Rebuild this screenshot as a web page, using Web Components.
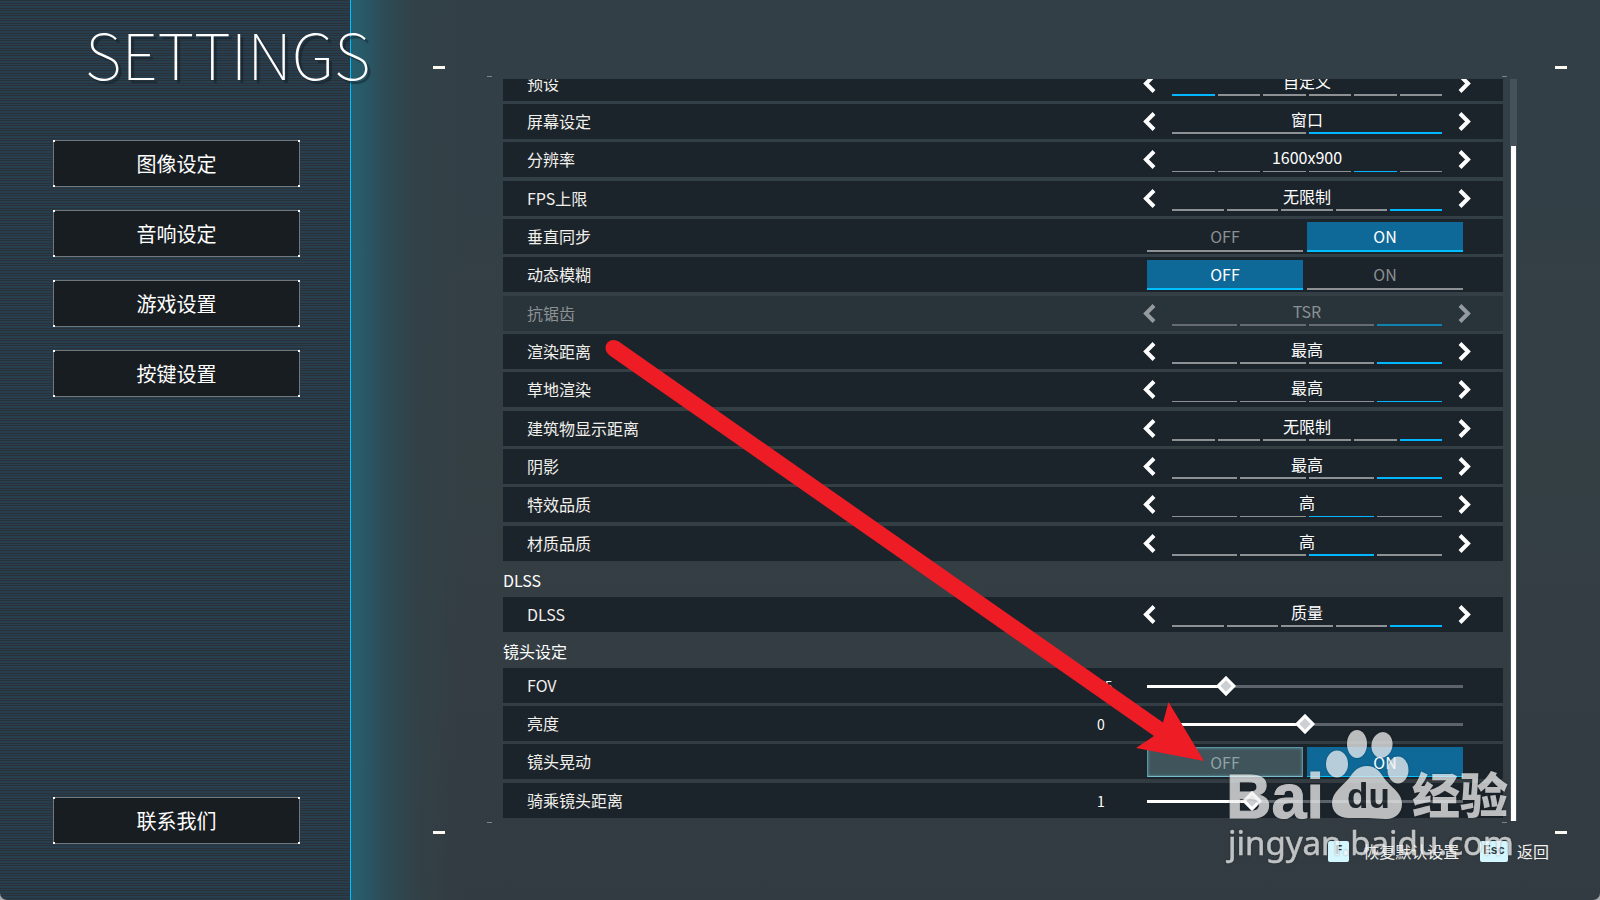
<!DOCTYPE html>
<html lang="zh-CN">
<head>
<meta charset="utf-8">
<title>Settings</title>
<style>
html,body{margin:0;min-height:100vh}
html{background:#a9adb0}
body{font-family:"Noto Sans CJK SC",sans-serif;color:#fff;display:flex}
game-settings{flex:1}
</style>
</head>
<body>
<game-settings></game-settings>
<script>
const define=(name,html,setup)=>{
  const t=document.createElement('template');t.innerHTML=html;
  customElements.define(name,class extends HTMLElement{
    connectedCallback(){
      if(this.shadowRoot)return;
      const r=this.attachShadow({mode:'open'});
      r.append(t.content.cloneNode(true));
      if(setup)setup(this,r);
    }
  });
};

define('menu-button',`<style>
:host{display:block}
button{position:relative;box-sizing:border-box;width:100%;height:47px;padding:0;border:1px solid #70777a;background:#181d21;color:#fff;font:400 20px/24px "Noto Sans CJK SC",sans-serif;display:block}
i{position:absolute;width:2px;height:2px;background:#fff}
.a,.b{top:-1px}.c,.d{bottom:-1px}.a,.c{left:-1px}.b,.d{right:-1px}
</style><button type="button"><slot></slot><i class="a"></i><i class="b"></i><i class="c"></i><i class="d"></i></button>`);

define('side-bar',`<style>
:host{position:relative;z-index:1;display:flex;flex-direction:column;box-sizing:border-box;width:351px;padding:0 50px 56px 53px;border-right:1px solid #00bfff;
background:repeating-linear-gradient(180deg,#2a3139 0 1px,#263e4d 1px 3px,#2a3139 3px 4px,#263e4d 4px 5px)}
h1{margin:0 -70px 0 32px;padding-top:20px;height:120px;box-sizing:content-box;font-size:64px;line-height:64px;font-weight:100;white-space:nowrap;text-shadow:3px 3px 1px rgba(15,28,36,.5)}
nav{display:flex;flex-direction:column;gap:23px;flex:1}
.end{margin-top:auto}
</style><h1>SETTINGS</h1><nav>
<menu-button>图像设定</menu-button><menu-button>音响设定</menu-button><menu-button>游戏设置</menu-button><menu-button>按键设置</menu-button>
<menu-button class="end">联系我们</menu-button></nav>`);

define('setting-row',`<style>
:host{display:flex;align-items:center;height:35px;padding:0 40px 0 24px;background:#1c242b;font-size:16px;line-height:24px;color:#f2f0eb}
:host([disabled]){background:#29343a;color:#8b9093}
.label{flex:1;padding-bottom:2px}
</style><span class="label"><slot name="label"></slot></span><slot></slot>`);

define('option-picker',`<style>
:host{display:grid;grid-template-columns:25px 270px 21px;width:316px;height:35px;color:#fff}
:host([dim]){color:#8b9093}
:host([dim]) .bars{opacity:.6}
:host([dim]) svg{opacity:.5}
button{border:0;background:none;padding:0;display:flex;align-items:center;color:#fff}
button:last-child{justify-content:flex-end}
svg{display:block;flex:none;margin:0 -9px 0 -5px}
.mid{display:flex;flex-direction:column;text-align:center}
.v{height:28px;line-height:30px}
.bars{display:flex;gap:3px}
.bars i{flex:1;height:2px;background:#8d9194}
.bars i.on{background:#00b7ff}
:host([thin]) .bars i{height:1px;margin-top:1px}
</style><button type="button" aria-label="上一项"><svg width="14" height="21" viewBox="0 0 14 21"><path d="M12 2.500L4 10.500L12 18.500" fill="none" stroke="currentColor" stroke-width="4"/></svg></button>
<div class="mid"><div class="v"><slot></slot></div><div class="bars"></div></div>
<button type="button" aria-label="下一项"><svg width="14" height="21" viewBox="0 0 14 21"><path d="M2 2.500L10 10.500L2 18.500" fill="none" stroke="currentColor" stroke-width="4"/></svg></button>`,(el,r)=>{
  const n=+el.getAttribute('count'),at=+el.getAttribute('at'),b=r.querySelector('.bars');
  for(let k=1;k<=n;k++){const i=document.createElement('i');if(k===at)i.className='on';b.append(i)}
});

define('on-off',`<style>
:host{display:grid;grid-template-columns:1fr 1fr;gap:4px;width:316px;margin-top:1px}
button{box-sizing:border-box;height:30px;padding:0;border:0;border-bottom:2px solid #8d9194;background:none;color:#8b9093;font:16px/24px "Noto Sans CJK SC",sans-serif}
button.on{background:#0f6998;border-color:#00bfff;color:#fff}
:host([hover]) button:first-of-type{background:#3f545b;color:#8fa3a8;border:1px solid #5b93a3;border-bottom-color:#77bccb;box-shadow:inset 0 0 3px #5f9fae}
:host([hover]) button.on{border-bottom-width:1px}
</style><button type="button">OFF</button><button type="button">ON</button>`,(el,r)=>{
  r.querySelectorAll('button')[el.getAttribute('value')==='on'?1:0].classList.add('on');
});

define('range-field',`<style>
:host{display:flex;align-items:center}
output{width:26px;margin-right:24px;font-size:14px;line-height:20px;color:#fff}
input{-webkit-appearance:none;appearance:none;width:330px;height:21px;margin:0 -7px;background:none}
input::-webkit-slider-runnable-track{height:21px;background:linear-gradient(#fff,#fff) 7px 10px/var(--fill) 3px no-repeat,linear-gradient(#5c636a,#5c636a) 7px 10px/316px 3px no-repeat}
input::-webkit-slider-thumb{-webkit-appearance:none;box-sizing:border-box;width:14px;height:14px;margin-top:4px;border:3px solid #fff;background:#cdd0d3;transform:rotate(45deg)}
</style><output></output><input type="range">`,(el,r)=>{
  const i=r.querySelector('input'),g=a=>el.getAttribute(a);
  i.min=g('min');i.max=g('max');i.step='any';i.value=g('value');i.setAttribute('aria-label',g('name'));
  i.style.setProperty('--fill',Math.round(316*(g('value')-g('min'))/(g('max')-g('min')))+'px');
  r.querySelector('output').textContent=g('value');
});

define('setting-group',`<style>
:host{display:flex;flex-direction:column;gap:3px;flex:none}
::slotted(h2){margin:0 0 -3px;height:36px;font-size:16px;line-height:38px;font-weight:400}
::slotted(setting-row:nth-child(3n+1)){margin-bottom:1px}
::slotted(setting-row:last-child){margin-bottom:0}
</style><slot></slot>`);

define('scroll-panel',`<style>
:host{display:grid;grid-template-columns:1fr 7px;gap:7px;min-height:0}
.view{display:flex;flex-direction:column;justify-content:flex-end;overflow:hidden;padding-bottom:4px;min-height:0}
.track{background:#46525a;display:flex;flex-direction:column;justify-content:flex-end;height:calc(100% - 1px)}
.thumb{height:91%;margin:0 1px;background:#fff}
</style><div class="view"><slot></slot></div><div class="track"><div class="thumb"></div></div>`);

define('corner-marks',`<style>
:host{position:absolute;pointer-events:none}
i{position:absolute;width:var(--w);height:var(--h);background:var(--c)}
.a,.b{top:0}.c,.d{bottom:0}.a,.c{left:0}.b,.d{right:0}
</style><i class="a"></i><i class="b"></i><i class="c"></i><i class="d"></i>`);

define('key-hint',`<style>
:host{display:flex;align-items:center;font-size:16px;line-height:24px;color:#f4f2ee}
kbd{box-sizing:border-box;min-width:21px;height:21px;padding:0 3px;margin-right:9px;border-radius:2px;background:#d3f6ff;color:#2c3940;font:bold 12px/21px "Liberation Mono",monospace;text-align:center}
:host([wide]) kbd{margin-right:14px}
</style><kbd></kbd><slot></slot>`,(el,r)=>{r.querySelector('kbd').textContent=el.getAttribute('key')});

define('baidu-mark',`<style>
:host{position:absolute;right:80px;bottom:16px;width:300px;height:160px;pointer-events:none;opacity:.74}
svg{display:block;overflow:visible;filter:drop-shadow(0 0 1px rgba(0,0,0,.4))}
</style><svg width="300" height="160" viewBox="1220 724 300 160" fill="#f2f2f2">
<ellipse cx="1337" cy="764" rx="11" ry="13.500"/><ellipse cx="1357" cy="744" rx="10" ry="14"/><ellipse cx="1382" cy="745" rx="10.500" ry="13" transform="rotate(10 1382 745)"/><ellipse cx="1398" cy="770" rx="10.500" ry="13.500"/>
<path d="M1367 766c9 0 13 6 17 12 7 10 18 14 18 26 0 9-7 15-16 15-7 0-12-1-18-1s-12 0-19 0c-10 0-17-6-17-15 0-11 11-17 18-26 4-6 8-11 17-11z"/>
<text x="1226" y="818" font-family="Liberation Sans" font-weight="700" font-size="63" stroke="#f2f2f2">Bai</text>
<text x="1347" y="808" font-family="Liberation Sans" font-weight="700" font-size="35" fill="#20272c">du</text>
<text x="1412" y="813" font-family="Noto Sans CJK SC" font-weight="900" font-size="48">经验</text>
<text x="1228" y="855" font-family="Noto Sans" font-weight="400" font-size="33" stroke="#f2f2f2" stroke-width=".5">jingyan.baidu.com</text>
</svg>`);

define('pointer-arrow',`<style>
:host{position:absolute;z-index:2;top:0;left:0;pointer-events:none}
svg{display:block}
</style><svg width="1250" height="800" viewBox="0 0 1250 800" fill="#ee1c24"><circle cx="613.500" cy="348" r="8"/><path d="M618 341L1163 722.500L1168.500 702L1204 761L1136 748L1154 736L609 355z"/></svg>`);

define('settings-main',`<style>
:host{flex:1;position:relative;display:flex;flex-direction:column;box-sizing:border-box;padding:79px 83px 0 152px;
background:linear-gradient(90deg,#265f6f 0,#295866 14px,#2d4c57 32px,#324248 60px,rgba(50,63,70,0) 110px),linear-gradient(180deg,#323f47,#343f44 50%,#323b41)}
scroll-panel{height:calc(100vh - 157px)}
footer{display:flex;gap:21px;justify-content:flex-end;margin-right:-32px;height:24px;margin-top:17px}
.outer{inset:66px 33px 66px 82px;--w:12px;--h:3px;--c:#fbf8f1}
.inner{inset:76px 93px 77px 136px;--w:5px;--h:1px;--c:#7d868a}
</style>
<corner-marks class="outer"></corner-marks><corner-marks class="inner"></corner-marks>
<scroll-panel></scroll-panel>
<footer><key-hint key="F" wide>恢复默认设置</key-hint><key-hint key="Esc">返回</key-hint></footer>
<baidu-mark></baidu-mark>`,(el,r)=>{
  const P=(l,v,c,a,x='')=>`<setting-row ${x.includes('dim')?'disabled':''}><span slot="label">${l}</span><option-picker count="${c}" at="${a}" ${x}>${v}</option-picker></setting-row>`;
  const T=(l,v,x='')=>`<setting-row><span slot="label">${l}</span><on-off value="${v}" ${x}></on-off></setting-row>`;
  const R=(l,min,max,v)=>`<setting-row><span slot="label">${l}</span><range-field name="${l}" min="${min}" max="${max}" value="${v}"></range-field></setting-row>`;
  r.querySelector('scroll-panel').innerHTML=
  '<setting-group><h2></h2>'+P('预设','自定义',6,1)+P('屏幕设定','窗口',2,2)+P('分辨率','1600x900',6,5,'thin')+P('FPS上限','无限制',5,5)
  +T('垂直同步','on')+T('动态模糊','off')+P('抗锯齿','TSR',4,4,'dim')+P('渲染距离','最高',4,4)+P('草地渲染','最高',4,4,'thin')
  +P('建筑物显示距离','无限制',6,6)+P('阴影','最高',4,4)+P('特效品质','高',4,3,'thin')+P('材质品质','高',4,3)+'</setting-group>'
  +'<setting-group><h2>DLSS</h2>'+P('DLSS','质量',5,5)+'</setting-group>'
  +'<setting-group><h2>镜头设定</h2>'+R('FOV',60,120,75)+R('亮度',-5,5,0)+T('镜头晃动','on','hover')+R('骑乘镜头距离',0,3,1)+'</setting-group>';
});

define('game-settings',`<style>
:host{position:relative;display:flex;min-height:100vh;border-radius:0 0 7px 7px;overflow:hidden}
</style><side-bar></side-bar><settings-main></settings-main><pointer-arrow></pointer-arrow>`);
</script>
</body>
</html>
